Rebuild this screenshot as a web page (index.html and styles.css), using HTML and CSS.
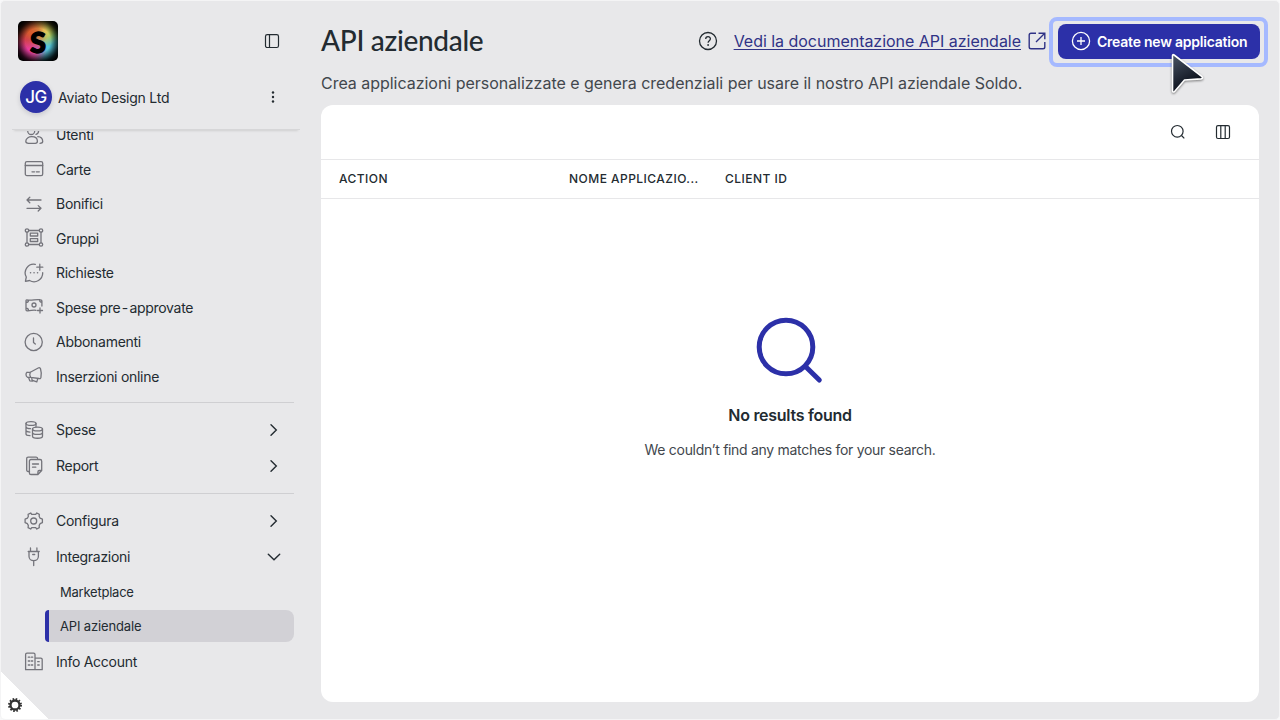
FILE: index.html
```
<!DOCTYPE html>
<html lang="it">
<head>
<meta charset="utf-8">
<title>API aziendale</title>
<link rel="stylesheet" href="styles.css">
</head>
<body>
<div class="app">
  <aside class="sidebar">
    <header class="side-head">
      <div class="brand-row">
        <div class="logo"><span>S</span></div>
        <svg class="panel-icon" width="16" height="16" viewBox="0 0 16 16"><rect x="1.5" y="1.7" width="13" height="12.8" rx="1.8"/><path d="M5.5 1.7v12.8"/></svg>
      </div>
      <div class="account">
        <div class="avatar"><span>JG</span></div>
        <span class="company">Aviato Design Ltd</span>
        <svg class="dots" width="4" height="12" viewBox="0 0 4 12"><circle cx="2" cy="1.5" r="1.2"/><circle cx="2" cy="6" r="1.2"/><circle cx="2" cy="10.5" r="1.2"/></svg>
      </div>
    </header>
    <nav class="nav">
      <ul class="group main-group">
        <li class="item"><svg class="icon" viewBox="0 0 20 20"><circle cx="7.2" cy="6" r="3.5"/><path d="M4.500 18.300h6.800q2.100 0 2.100-2c0-3-2.400-4.600-5.600-4.600S1.800 13.400 1.800 16.300q0 2 2.700 2M12 2.700a3.400 3.400 0 0 1 0 6.600M13.800 11.700c3 .2 5 2.200 4.900 5q-.2 1.600-2.700 1.600"/></svg><span>Utenti</span></li>
        <li class="item"><svg class="icon" viewBox="0 0 20 20"><rect x="1.300" y="2.600" width="17.400" height="14" rx="1.600"/><path d="M1.300 6.500h17.400M8 12.800h2.500M12.300 12.800h3"/></svg><span>Carte</span></li>
        <li class="item"><svg class="icon" viewBox="0 0 20 20"><path d="M17 6H3M5.800 3.300 3 6l2.800 2.700M3 14.300h14M14.200 11.600l2.800 2.700-2.800 2.700"/></svg><span>Bonifici</span></li>
        <li class="item"><svg class="icon" viewBox="0 0 20 20"><circle cx="3" cy="2.500" r="1.700"/><circle cx="17" cy="2.500" r="1.700"/><circle cx="3" cy="16.500" r="1.700"/><circle cx="17" cy="16.500" r="1.700"/><path d="M4.700 2.500h10.600M4.700 16.500h10.600M3 4.200v10.600M17 4.200v10.600"/><rect x="6.300" y="5.200" width="7.400" height="2.800"/><rect x="6.300" y="10.700" width="7.400" height="2.800"/></svg><span>Gruppi</span></li>
        <li class="item"><svg class="icon" viewBox="0 0 20 20"><path d="M11.300 1.300A8.600 8.600 0 0 0 2.300 14L1.400 18.300l4.200-.8A8.700 8.700 0 0 0 18.700 9.700M12.800 4.200h6M15.800 1.200v6"/><path class="round" d="M6.500 9.700h.1M10 9.700h.1M13.500 9.700h.1"/></svg><span>Richieste</span></li>
        <li class="item"><svg class="icon" viewBox="0 0 20 20"><path d="M12 13.300c-3-1-5.500 1-9 .5-.8 0-1-.4-1-1V4c0-1 .5-1.200 1.200-1 5 .9 8.500-1.100 13.500-.2.800.1 1.200.3 1.200 1.200v5M2 5.700c1.800 0 2.500-.8 2.500-2.600M15.500 2.700c0 1.500.7 2.500 2.300 2.500M2 11.200c1.700 0 2.500.7 2.500 2.500M13.500 13.500h5M16 11v5"/><circle cx="10" cy="8" r="2"/></svg><span class="advance">Spese pre<i>-</i>approvate</span></li>
        <li class="item"><svg class="icon" viewBox="0 0 20 20"><circle cx="9.700" cy="10" r="8.600"/><path d="M9.500 6v4.500l1.800 1.500"/></svg><span>Abbonamenti</span></li>
        <li class="item"><svg class="icon" viewBox="0 0 20 20"><path d="M3 6.300h3.300l7.900-4.300c1.200-.6 2-.2 2.300.8 1 3.200 1 6.200.4 8.800-.3 1-.9 1.300-1.900.9L6.800 11.300H3.500c-1.900-1.200-1.900-4-.5-5M6.300 6.300c-.7 1.500-.7 3.400.5 5M4.600 11.500l1.200 3.400 2.600.3-.9-3.500M8.500 14.300l4.300 1.600 1-3.600"/></svg><span>Inserzioni online</span></li>
      </ul>
      <ul class="group">
        <li class="item"><svg class="icon" viewBox="0 0 20 20"><ellipse cx="7" cy="3.500" rx="5" ry="1.900"/><path d="M2 3.500v10.500q0 1.500 4 1.700M12 3.500v3M2 7q.5 1.600 4.500 1.700M2 10.500q.5 1.500 4 1.600"/><ellipse cx="13.500" cy="9" rx="5" ry="1.900"/><path d="M8.500 9v7.200c0 2.700 10 2.700 10 0V9M8.500 12.500c0 2.600 10 2.600 10 0"/></svg><span>Spese</span><svg class="chevron" viewBox="0 0 14 14"><path d="M4 1.700 9.300 7 4 12.300"/></svg></li>
        <li class="item"><svg class="icon" viewBox="0 0 20 20"><path d="M5.500 15.500H4.200c-1 0-1.500-.6-1.500-1.500V2.700c0-1 .5-1.500 1.500-1.500h8c1.200 0 1.500.5 1.500 2"/><path d="M7 3.500h9c1.200 0 1.700.6 1.700 1.700v9.300l-3.800 4H7c-1 0-1.600-.5-1.600-1.600V5.200C5.400 4 6 3.500 7 3.500M17.500 14.500h-2.300q-1.300 0-1.300 1.400v2.400M8.500 8h6M8.500 11.200h3.300"/></svg><span>Report</span><svg class="chevron" viewBox="0 0 14 14"><path d="M4 1.700 9.300 7 4 12.300"/></svg></li>
      </ul>
      <ul class="group last">
        <li class="item"><svg class="icon" viewBox="0 0 20 20"><path d="M7.700 3.400 6.700 2 4.100 3.300l.2 2.200-.9 1.700-2.300 1v3.500l2.300 1 .9 1.700-.2 2.300L6.700 18l1-1.300h4l1.100 1.300 2.500-1.300-.1-2.300.9-1.700 2.300-1V8.200l-2.300-1-.9-1.700.1-2.200L12.800 2l-1.100 1.400Z"/><circle cx="9.700" cy="10" r="3"/></svg><span>Configura</span><svg class="chevron" viewBox="0 0 14 14"><path d="M4 1.700 9.300 7 4 12.300"/></svg></li>
        <li class="item"><svg class="icon" viewBox="0 0 20 20"><path d="M6.500 1v3.500M12.900 1v3.500M4.200 4.500h11M5 4.500v4.700c0 2.700 2.100 4.500 4.700 4.500s4.700-1.800 4.700-4.500V4.500M9.700 13.700v4.800M8.700 7.500h2"/></svg><span>Integrazioni</span><svg class="chevron" viewBox="0 0 14 14"><path d="M1.300 4.200 7 9.800l5.700-5.600"/></svg></li>
        <li><ul class="sub"><li>Marketplace</li><li class="current">API aziendale</li></ul></li>
        <li class="item info"><svg class="icon" viewBox="0 0 20 20"><path d="M11 17.700H1.600V2.500q0-1.400 1.400-1.400h6.600Q11 1.100 11 2.500zM11 6.200h5.800q1.400 0 1.400 1.400v10.100H11M4.300 5.200h1.400M7.300 5.200h1.400M4.300 9h1.400M7.300 9h1.400M4.300 13h1.400M7.300 13h1.400M13.700 9.700h1.500M13.700 13h1.500"/></svg><span>Info Account</span></li>
      </ul>
    </nav>
  </aside>
  <main class="content">
    <div class="title-row">
      <h1>API aziendale</h1>
      <svg class="help" width="20" height="20" viewBox="0 0 20 20"><circle cx="10" cy="10" r="8.500"/><path d="M7.700 8c0-3 4.700-3 4.700-.2 0 1.800-2.300 2-2.300 4"/><path class="point" d="M10.100 14v.1"/></svg>
      <a class="doc-link" href="#">Vedi la documentazione API aziendale</a>
      <svg class="external" width="18" height="18" viewBox="0 0 18 18"><path d="M8 1.300H3Q1.200 1.300 1.200 3v12q0 1.800 1.800 1.800h12q1.800 0 1.800-1.800v-5M10.500 1.300h6.300v6M16.500 1.500 8 10"/></svg>
      <button class="create"><svg width="20" height="20" viewBox="0 0 20 20"><circle cx="10" cy="10" r="8.600"/><path d="M10 6v8M6 10h8"/></svg><span>Create new application</span></button>
    </div>
    <p class="intro">Crea applicazioni personalizzate e genera credenziali per usare il nostro API aziendale Soldo.</p>
    <section class="card">
      <div class="tools">
        <svg width="16" height="16" viewBox="0 0 16 16"><circle cx="7.300" cy="7.300" r="5.800"/><path d="m11.500 11.500 2.800 2.800"/></svg>
        <svg width="16" height="16" viewBox="0 0 16 16"><rect x="1.500" y="1.700" width="13" height="12.800" rx="1.500"/><path d="M5.800 1.700v12.800M10.200 1.700v12.800"/></svg>
      </div>
      <div class="columns"><b>ACTION</b><b>NOME APPLICAZIO...</b><b>CLIENT ID</b></div>
      <div class="empty">
        <svg width="68" height="68" viewBox="0 0 68 68"><circle cx="30" cy="31" r="26.800"/><path d="M49.500 50.500 63.300 64"/></svg>
        <h2>No results found</h2>
        <p>We couldn’t find any matches for your search.</p>
      </div>
    </section>
  </main>
  <div class="corner"><svg width="14" height="14" viewBox="0 0 14 14"><circle class="teeth" cx="7" cy="7" r="6"/><circle class="ring" cx="7" cy="7" r="4.500"/></svg></div>
  <svg class="cursor" width="42" height="50" viewBox="0 0 42 50"><defs><linearGradient id="pointer" x1="0" y1="0" x2=".45" y2="1"><stop stop-color="#4a5565"/><stop offset="1" stop-color="#050914"/></linearGradient></defs><path d="M6.500 5.800Q6.500 4 8.100 5L36 26.700q1.400 1.800-1 2.200L18.500 30 8.800 41.300Q6.500 43 6.500 40.500Z"/></svg>
</div>
</body>
</html>
```

FILE: styles.css
```
* { box-sizing: border-box; }
body { margin: 0; width: 1280px; height: 720px; overflow: hidden; background: #f8f8f9; font-family: Inter, "Liberation Sans", sans-serif; color: #232b31; }
svg { display: block; flex: none; fill: none; stroke: #232b31; }
ul { list-style: none; margin: 0; padding: 0; }
.app { position: relative; display: flex; width: 1280px; height: 720px; background: #e8e8ea; border: 1px solid #f4f4f5; border-radius: 5px; overflow: hidden; }
.sidebar { width: 300px; height: 718px; flex: none; display: flex; flex-direction: column; }
.side-head { height: 129px; flex: none; margin: 0 1px 0 11px; border-bottom: 1px solid #d6d6d8; box-shadow: 0 3px 2px -2px #cfcfd1; padding-top: 20px; }
.brand-row { display: flex; align-items: center; justify-content: space-between; padding: 0 20px 0 6px; }
.logo { width: 40px; height: 40px; border-radius: 5px; overflow: hidden; display: flex; align-items: center; justify-content: center; background: radial-gradient(circle, transparent 45%, #000c 75%, #000 90%), radial-gradient(circle at 30% 26%, #dc5a2b 0, #c9482499 22%, transparent 46%), radial-gradient(circle at 64% 24%, #f5ec6a 0, #e0d64fb0 20%, transparent 42%), radial-gradient(circle at 26% 70%, #f03aa6 0, #e6349cb0 24%, transparent 46%), radial-gradient(circle at 74% 66%, #52cbe2 0, #37b0ccb0 26%, transparent 50%), radial-gradient(circle at 86% 38%, #31a83c 0, transparent 32%), radial-gradient(circle at 14% 46%, #cc3048 0, transparent 32%), radial-gradient(circle, #fbe9dc 0, #c79b86 35%, #000 78%); }
.logo span { font: 900 29px/39px Lato, sans-serif; color: #000; -webkit-text-stroke: 1.300px #000; }
.panel-icon { stroke-width: 1.200; }
.account { display: flex; align-items: center; height: 32px; margin-top: 20px; padding: 0 25px 0 8px; }
.avatar { width: 32px; height: 32px; border-radius: 50%; background: #2c30a8; color: #fff; font-size: 17px; font-weight: 500; letter-spacing: -.6px; line-height: 33px; text-align: center; box-shadow: 0 2px 5px #00003026; }
.company { margin: 1px auto 0 6px; font-size: 14px; letter-spacing: -.22px; }
.dots { fill: #232b31; stroke: none; }
.nav { flex: 1; overflow: hidden; margin-top: 1px; }
.main-group { margin: -13.500px 0 8.500px; }
.main-group .item { height: 34.500px; }
.group + .group { border-top: 1px solid #cfcfd2; margin: 0 7px 0 14px; padding-top: 8.500px; }
.group + .group.last { margin-top: 9px; padding-top: 9px; }
.item { height: 36px; display: flex; align-items: center; padding-left: 23px; font-size: 14px; letter-spacing: -.28px; }
.group + .group .item { padding-left: 9px; }
.icon { width: 20px; height: 20px; margin-right: 12px; stroke: #74747b; stroke-width: 1.300; stroke-linejoin: round; stroke-linecap: round; }
.round { stroke-width: 1.500; }
.advance { letter-spacing: -.3px; }
.advance i { font-style: normal; padding: 0 1.500px; }
.chevron { width: 14px; height: 14px; margin: 0 13px 0 auto; stroke-width: 1.400; stroke-linecap: round; }
.sub { padding-left: 30px; font-size: 13px; letter-spacing: -.23px; }
.sub li { height: 35px; line-height: 34px; padding-left: 15px; }
.sub .current { height: 32px; line-height: 32px; padding-left: 11px; border-left: 4px solid #2c30a8; border-radius: 4px 8px 8px 4px; background: #d2d1d6; letter-spacing: -.15px; }
.info { margin-top: 2px; }
.content { width: 938px; margin-left: 20px; display: flex; flex-direction: column; }
.title-row { height: 80px; display: flex; align-items: center; }
h1 { font: 500 28px/40px Lato, sans-serif; margin: 0 auto 2px 0; letter-spacing: -.3px; }
.help { stroke-width: 1.300; margin-right: 16px; }
.point { stroke-width: 1.800; stroke-linecap: round; }
.doc-link { color: #303386; font-size: 16px; line-height: 20px; letter-spacing: -.025px; text-decoration-thickness: 1px; text-underline-offset: 2px; white-space: nowrap; }
.external { margin: 0 12px 0 7px; stroke: #303386; stroke-width: 1.400; }
.create { position: relative; flex: none; display: flex; align-items: center; width: 202px; height: 35px; margin-right: -1px; padding: 0 0 0 13px; border: 0; border-radius: 8px; color: #fff; background: #2c30a8; font: 600 14px Inter, sans-serif; letter-spacing: -.23px; white-space: nowrap; }
.create::after { content: ""; position: absolute; inset: -7px -8px -8px -9px; border: 4px solid #a5b9ff; border-radius: 8px; }
.create svg { stroke: #fff; stroke-width: 1.300; margin-right: 6px; }
.intro { height: 24px; margin: 0; font-size: 16px; line-height: 5px; letter-spacing: -.027px; color: #42474d; white-space: nowrap; }
.card { height: 597px; border-radius: 12px; background: #fff; }
.tools { height: 54px; display: flex; align-items: center; justify-content: flex-end; gap: 29px; padding-right: 28px; }
.tools svg { stroke-width: 1.200; }
.columns { display: grid; grid-template-columns: 230px 156px 1fr; align-items: center; height: 40px; padding: 0 0 2px 18px; border-top: 1px solid #e7e7e9; border-bottom: 1px solid #e7e7e9; font-size: 12px; }
.columns b { font-weight: 500; letter-spacing: .47px; }
.empty { display: flex; flex-direction: column; align-items: center; padding-top: 117px; }
.empty svg { stroke: #2c30a8; stroke-width: 5; stroke-linecap: round; }
.empty h2 { margin: 19px 0 0; font-size: 16px; font-weight: 600; line-height: 24px; letter-spacing: -.28px; }
.empty p { margin: 12px 0 0; font-size: 14px; line-height: 22px; letter-spacing: -.3px; color: #42474d; }
.corner { position: absolute; left: 0; bottom: 0; width: 47px; height: 47px; padding: 26px 0 0 7px; background: linear-gradient(to top right, #fff 50%, transparent 50.500%); }
.corner .teeth { stroke: #333; stroke-width: 2; stroke-dasharray: 1.570 1.570; }
.corner .ring { stroke: #333; stroke-width: 2.300; }
.cursor { position: absolute; left: 1165px; top: 49px; filter: drop-shadow(0 1px 1px #0007); }
.cursor path { fill: url(#pointer); stroke: #fff; stroke-width: 1.600; stroke-linejoin: round; }
```
